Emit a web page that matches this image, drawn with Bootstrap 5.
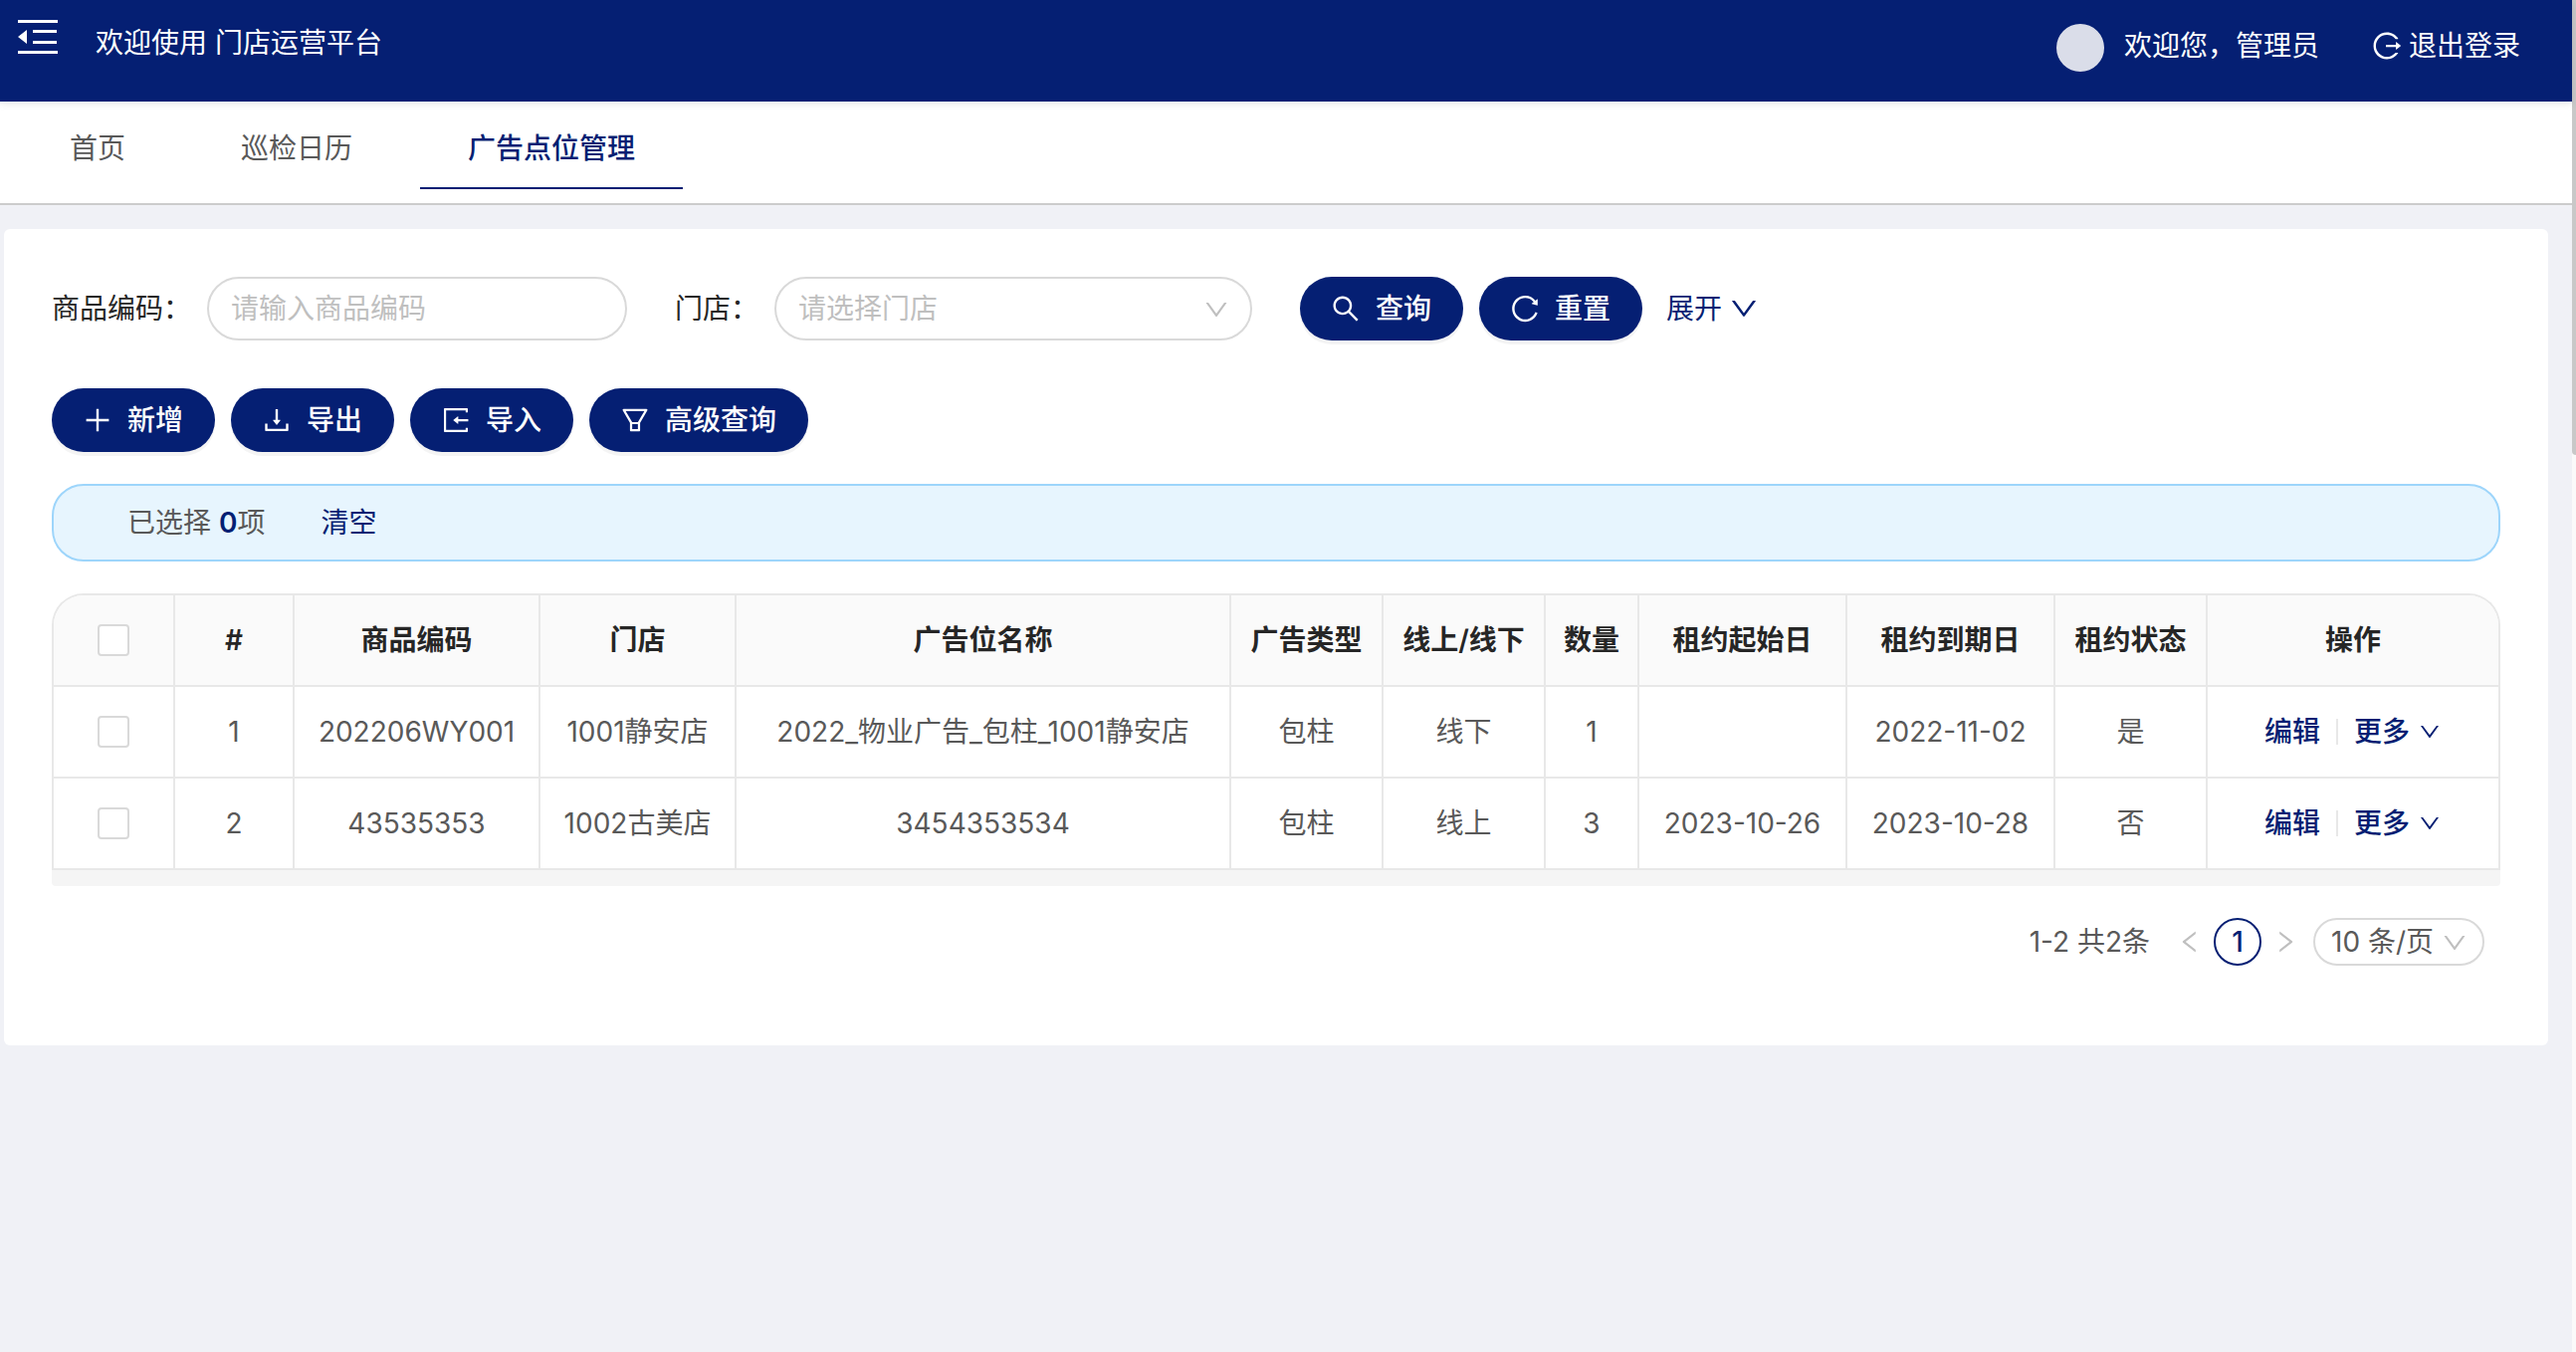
<!DOCTYPE html>
<html lang="zh-CN">
<head>
<meta charset="utf-8">
<meta name="viewport" content="width=device-width, initial-scale=1">
<title>门店运营平台</title>
<link href="https://cdn.jsdelivr.net/npm/bootstrap@5.3.0/dist/css/bootstrap.min.css" rel="stylesheet">
<style>
:root { --brand: #051f73; --line: #e8e8e8; --field: #d9d9d9; --muted: #bfbfbf; --ink: #262626; --body: #595959; }
body { background: #f0f1f6; color: var(--body); font-family: Inter, "Noto Sans CJK SC", sans-serif; font-size: 28px; line-height: 42px; }
svg.ic { width: 32px; height: 32px; fill: currentColor; flex: none; display: block; }
svg.ic-sm { width: 24px; height: 24px; }
svg.ic-md { width: 28px; height: 28px; }
.shell { min-height: 100vh; }
.page-col { min-width: 0; }
.scroll-rail { width: 4px; flex: none; background: #fafafa; }
.scroll-thumb { height: 457px; background: #c8c8c8; border-radius: 0 0 0 4px; }
.topbar { height: 102px; background: var(--brand); padding: 0 52px 10px 18px; box-shadow: 0 2px 8px rgba(0,0,0,.1); position: relative; z-index: 1; }
.fold { width: 40px; height: 36px; margin-bottom: 18px; color: #fff; }
.fold svg { display: block; fill: currentColor; }
.brand-name { margin-left: 38px; margin-bottom: 6px; }
.face { width: 48px; height: 48px; background: #dadde9; margin-top: 4px; }
.icon-text { gap: 6px; }
.tabs { height: 104px; background: #fff; border-bottom: 2px solid #ccc; padding-left: 22px; gap: 20px; }
.tabs .nav-link { color: var(--body); padding: 26px 48px 18px; border-bottom: 2px solid transparent; border-radius: 0; height: 88px; }
.tabs .nav-link.active { color: var(--brand); border-color: var(--brand); font-weight: 500; }
.panel { margin: 24px 24px 0 4px; padding: 48px 48px 80px; background: #fff; border-radius: 6px; }
.field-label { color: var(--ink); }
.pill-field { height: 64px; border: 2px solid var(--field); border-radius: 32px; padding: 0 22px; font-size: 28px; line-height: 42px; color: var(--ink); background: #fff; }
.pill-field::placeholder { color: var(--muted); }
select.pill-field { background-image: none; color: var(--muted); }
.code-field { width: 422px; }
.shop-field { width: 480px; }
.over-chevron { position: absolute; right: 22px; top: 50%; margin-top: -13px; color: var(--muted); pointer-events: none; }
.btn-pill { height: 64px; border: 0; border-radius: 32px; padding: 0 32px 0 30px; background: var(--brand); color: #fff; font-size: 28px; line-height: 42px; font-weight: 500; display: inline-flex; align-items: center; gap: 14px; box-shadow: 0 4px 0 rgba(0,0,0,.045); }
.btn-pill:hover { background: #17348f; color: #fff; }
a.plain { color: var(--brand); text-decoration: none; }
.picked { height: 78px; margin-top: 32px; border: 2px solid #9dd5fb; border-radius: 32px; background: #e7f5fe; padding: 0 74px; }
.grid-wrap { margin-top: 32px; border: 2px solid var(--line); border-bottom: 0; border-radius: 32px 32px 0 0; overflow: hidden; }
.grid { table-layout: fixed; border-collapse: separate; border-spacing: 0; margin: 0; color: var(--body); }
.grid th, .grid td { height: 92px; padding: 0 8px; border: 0; border-right: 2px solid var(--line); border-bottom: 2px solid var(--line); text-align: center; vertical-align: middle; white-space: nowrap; color: inherit; }
.grid tr > :last-child { border-right: 0; }
.grid thead th { background: #fafafa; color: var(--ink); font-weight: 600; }
.tick.form-check-input { width: 32px; height: 32px; margin: 0 auto; border: 2px solid var(--field); border-radius: 4px; display: block; }
.ops { font-weight: 500; }
.ops .bar { width: 2px; height: 26px; background: var(--line); margin: 0 16px; }
.track { height: 16px; background: #f5f5f5; border-radius: 0 0 4px 4px; }
.pager { margin-top: 32px; padding-right: 16px; }
.pager .page-now { width: 48px; height: 48px; border: 2px solid var(--brand); border-radius: 50%; color: var(--brand); font-weight: 500; }
.pager a.arrow { color: var(--muted); padding: 0 10px 0 14px; }
.pager .page-now + a.arrow { padding: 0 14px 0 10px; }
.pager .total { margin-right: 12px; }
.pager .size-field { height: 48px; width: 172px; border-radius: 24px; padding: 0 16px; color: var(--body); }
.pager .over-chevron { right: 16px; }
</style>
</head>
<body>
<svg class="d-none" xmlns="http://www.w3.org/2000/svg">
  <symbol id="down" viewBox="0 0 1024 1024"><path d="M884 256h-75c-5.1 0-9.9 2.5-12.9 6.6L512 654.2 227.9 262.6c-3-4.1-7.8-6.6-12.9-6.6h-75c-6.5 0-10.3 7.4-6.5 12.7l352.6 486.1c12.8 17.6 39 17.6 51.7 0l352.6-486.1c3.9-5.3.1-12.7-6.4-12.7z"/></symbol>
  <symbol id="left" viewBox="0 0 1024 1024"><path d="M724 218.3V141c0-6.7-7.7-10.4-12.9-6.3L260.3 486.8a31.86 31.86 0 0 0 0 50.3l450.8 352.1c5.3 4.1 12.9.4 12.9-6.3v-77.3c0-4.9-2.3-9.6-6.1-12.6l-360-281 360-281.1c3.8-3 6.1-7.7 6.1-12.6z"/></symbol>
  <symbol id="right" viewBox="0 0 1024 1024"><path transform="matrix(-1 0 0 1 1024 0)" d="M724 218.3V141c0-6.7-7.7-10.4-12.9-6.3L260.3 486.8a31.86 31.86 0 0 0 0 50.3l450.8 352.1c5.3 4.1 12.9.4 12.9-6.3v-77.3c0-4.9-2.3-9.6-6.1-12.6l-360-281 360-281.1c3.8-3 6.1-7.7 6.1-12.6z"/></symbol>
  <symbol id="search" viewBox="0 0 1024 1024"><path d="M909.6 854.5L649.9 594.8C690.2 542.7 712 479 712 412c0-80.2-31.3-155.4-87.9-212.1-56.6-56.7-132-87.9-212.1-87.9s-155.5 31.3-212.1 87.9C143.2 256.5 112 331.8 112 412c0 80.1 31.3 155.5 87.9 212.1C256.5 680.8 331.8 712 412 712c67 0 130.6-21.8 182.7-62l259.7 259.6a8.2 8.2 0 0 0 11.6 0l43.6-43.5a8.2 8.2 0 0 0 0-11.6zM570.4 570.4C528 612.7 471.8 636 412 636s-116-23.3-158.4-65.6C211.3 528 188 471.8 188 412s23.3-116.1 65.6-158.4C296 211.3 352.2 188 412 188s116.1 23.2 158.4 65.6S636 352.2 636 412s-23.3 116.1-65.6 158.4z"/></symbol>
  <symbol id="reload" viewBox="0 0 1024 1024"><path d="M909.1 209.3l-56.4 44.1C775.8 155.1 656.2 92 521.9 92 290 92 102.3 279.5 102 511.5 101.7 743.7 289.8 932 521.9 932c181.3 0 335.8-115 394.6-276.1 1.5-4.2-.7-8.9-4.9-10.3l-56.7-19.5a8 8 0 0 0-10.1 4.8c-1.8 5-3.8 10-5.9 14.9-17.3 41-42.1 77.8-73.7 109.4A344.77 344.77 0 0 1 655.9 829c-42.3 17.9-87.4 27-133.8 27-46.5 0-91.5-9.1-133.8-27A341.5 341.5 0 0 1 279 755.2a342.16 342.16 0 0 1-73.7-109.4c-17.9-42.4-27-87.4-27-133.9s9.1-91.5 27-133.9c17.3-41 42.1-77.8 73.7-109.4 31.6-31.6 68.4-56.4 109.3-73.8 42.3-17.9 87.4-27 133.8-27 46.5 0 91.5 9.1 133.8 27a341.5 341.5 0 0 1 109.3 73.8c9.9 9.9 19.2 20.4 27.8 31.4l-60.2 47a8 8 0 0 0 3 14.1l175.6 43c5 1.2 9.9-2.6 9.9-7.7l.8-180.9c-.1-6.6-7.8-10.3-13-6.2z"/></symbol>
  <symbol id="plus" viewBox="0 0 1024 1024"><path d="M474 152h76v322h326v76H550v322h-76V550H148v-76h326z"/></symbol>
  <symbol id="download" viewBox="0 0 1024 1024"><path d="M505.7 661a8 8 0 0 0 12.6 0l112-141.7c4.1-5.2.4-12.9-6.3-12.9h-74.1V168c0-4.4-3.6-8-8-8h-60c-4.4 0-8 3.6-8 8v338.3H400c-6.7 0-10.4 7.7-6.3 12.9l112 141.8zM878 626h-60c-4.4 0-8 3.6-8 8v154H214V634c0-4.4-3.6-8-8-8h-60c-4.4 0-8 3.6-8 8v198c0 17.7 14.3 32 32 32h684c17.7 0 32-14.3 32-32V634c0-4.4-3.6-8-8-8z"/></symbol>
  <symbol id="import" viewBox="0 0 1024 1024"><path d="M888.3 757.4h-53.8c-4.2 0-7.7 3.5-7.7 7.7v61.8H197.1V197.1h629.8v61.8c0 4.2 3.5 7.7 7.7 7.7h53.8c4.2 0 7.7-3.4 7.7-7.7V158.7c0-17-13.7-30.7-30.7-30.7H158.7c-17 0-30.7 13.7-30.7 30.7v706.6c0 17 13.7 30.7 30.7 30.7h706.6c17 0 30.7-13.7 30.7-30.7V765.1c0-4.3-3.5-7.7-7.7-7.7zM902 476H588v-76c0-6.7-7.8-10.5-13-6.3l-141.9 112a8 8 0 0 0 0 12.6l141.9 112c5.3 4.2 13 .4 13-6.3v-76h314c4.4 0 8-3.6 8-8v-56c0-4.4-3.6-8-8-8z"/></symbol>
  <symbol id="filter" viewBox="0 0 1024 1024"><path d="M880.1 154H143.9c-24.5 0-39.8 26.7-27.5 48L349 597.4V838c0 17.7 14.2 32 31.8 32h262.4c17.6 0 31.8-14.3 31.8-32V597.4L907.7 202c12.2-21.3-3.1-48-27.6-48zM603.4 798H420.6V642h182.9v156zm9.6-236.6l-9.5 16.6h-183l-9.5-16.6L212.7 226h598.6L613 561.4z"/></symbol>
  <symbol id="logout" viewBox="0 0 1024 1024"><path d="M868 732h-70.3c-4.8 0-9.3 2.1-12.3 5.8-7 8.5-14.5 16.7-22.4 24.5a353.84 353.84 0 0 1-112.7 75.9A352.8 352.8 0 0 1 512.4 866c-47.9 0-94.3-9.4-137.9-27.8a353.84 353.84 0 0 1-112.7-75.9 353.28 353.28 0 0 1-76-112.5C167.3 606.2 158 559.9 158 512s9.4-94.2 27.8-137.8c17.8-42.1 43.4-80 76-112.5s70.5-58.1 112.7-75.9c43.6-18.4 90-27.8 137.9-27.8 47.9 0 94.3 9.3 137.9 27.8 42.2 17.8 80.1 43.4 112.7 75.9 7.9 7.9 15.3 16.1 22.4 24.5 3 3.7 7.6 5.8 12.3 5.8H868c6.3 0 10.2-7 6.7-12.3C798 160.5 663.8 81.6 511.3 82 271.7 82.6 79.6 277.1 82 516.4 84.4 751.9 276.2 942 512.4 942c152.1 0 285.7-78.8 362.3-197.7 3.4-5.3-.4-12.3-6.7-12.3zm88.9-226.3L815 393.7c-5.3-4.2-13-.4-13 6.3v76H488c-4.4 0-8 3.6-8 8v56c0 4.4 3.6 8 8 8h314v76c0 6.7 7.8 10.5 13 6.3l141.9-112a8 8 0 0 0 0-12.6z"/></symbol>
</svg>

<div class="shell d-flex">
  <div class="page-col flex-grow-1">
    <header class="topbar d-flex align-items-center text-white">
      <button type="button" class="fold btn p-0 border-0 rounded-0" aria-label="收起菜单"><svg width="40" height="36" viewBox="0 0 40 36"><path d="M0 1h40v3H0zM15 11h24v3H15zM15 22h24v3H15zM0 32h40v3H0zM0 18l9-7v14z"/></svg></button>
      <div class="brand-name">欢迎使用 门店运营平台</div>
      <div class="ms-auto d-flex align-items-center">
        <span class="face rounded-circle"></span>
        <span class="ms-3 ps-1">欢迎您，管理员</span>
        <a href="#" class="icon-text d-flex align-items-center ms-5 ps-1 text-white text-decoration-none"><svg class="ic"><use href="#logout"/></svg>退出登录</a>
      </div>
    </header>
    <nav class="tabs nav flex-nowrap">
      <a class="nav-link" href="#">首页</a>
      <a class="nav-link" href="#">巡检日历</a>
      <a class="nav-link active" aria-current="page" href="#">广告点位管理</a>
    </nav>

    <main class="panel">
      <form class="d-flex align-items-center">
        <label class="field-label me-3" for="code">商品编码：</label>
        <input id="code" type="text" class="form-control pill-field code-field" placeholder="请输入商品编码">
        <label class="field-label ms-5 me-3" for="shop">门店：</label>
        <div class="position-relative">
          <select id="shop" class="form-select pill-field shop-field"><option>请选择门店</option></select>
          <svg class="ic ic-md over-chevron"><use href="#down"/></svg>
        </div>
        <button type="button" class="btn btn-pill ms-5"><svg class="ic"><use href="#search"/></svg>查询</button>
        <button type="button" class="btn btn-pill ms-3"><svg class="ic"><use href="#reload"/></svg>重置</button>
        <a href="#" class="icon-text plain d-flex align-items-center ms-4">展开<svg class="ic"><use href="#down"/></svg></a>
      </form>

      <div class="d-flex gap-3 mt-5">
        <button type="button" class="btn btn-pill"><svg class="ic"><use href="#plus"/></svg>新增</button>
        <button type="button" class="btn btn-pill"><svg class="ic"><use href="#download"/></svg>导出</button>
        <button type="button" class="btn btn-pill"><svg class="ic"><use href="#import"/></svg>导入</button>
        <button type="button" class="btn btn-pill"><svg class="ic"><use href="#filter"/></svg>高级查询</button>
      </div>

      <div class="picked d-flex align-items-center">
        <span>已选择 <a href="#" class="plain fw-semibold">0</a>项</span>
        <a href="#" class="plain ms-5 ps-2">清空</a>
      </div>

      <div class="grid-wrap">
        <table class="grid table">
          <colgroup>
            <col style="width:122px"><col style="width:120px"><col style="width:247px"><col style="width:197px"><col><col style="width:153px"><col style="width:163px"><col style="width:94px"><col style="width:209px"><col style="width:209px"><col style="width:153px"><col style="width:292px">
          </colgroup>
          <thead>
            <tr>
              <th scope="col"><input class="form-check-input tick" type="checkbox" aria-label="全选"></th>
              <th scope="col">#</th><th scope="col">商品编码</th><th scope="col">门店</th><th scope="col">广告位名称</th><th scope="col">广告类型</th><th scope="col">线上/线下</th><th scope="col">数量</th><th scope="col">租约起始日</th><th scope="col">租约到期日</th><th scope="col">租约状态</th><th scope="col">操作</th>
            </tr>
          </thead>
          <tbody>
            <tr>
              <td><input class="form-check-input tick" type="checkbox" aria-label="选择第1行"></td>
              <td>1</td><td>202206WY001</td><td>1001静安店</td><td>2022_物业广告_包柱_1001静安店</td><td>包柱</td><td>线下</td><td>1</td><td></td><td>2022-11-02</td><td>是</td>
              <td><div class="ops d-flex align-items-center justify-content-center"><a href="#" class="plain">编辑</a><span class="bar"></span><a href="#" class="plain d-flex align-items-center">更多<svg class="ic ic-sm ms-2"><use href="#down"/></svg></a></div></td>
            </tr>
            <tr>
              <td><input class="form-check-input tick" type="checkbox" aria-label="选择第2行"></td>
              <td>2</td><td>43535353</td><td>1002古美店</td><td>3454353534</td><td>包柱</td><td>线上</td><td>3</td><td>2023-10-26</td><td>2023-10-28</td><td>否</td>
              <td><div class="ops d-flex align-items-center justify-content-center"><a href="#" class="plain">编辑</a><span class="bar"></span><a href="#" class="plain d-flex align-items-center">更多<svg class="ic ic-sm ms-2"><use href="#down"/></svg></a></div></td>
            </tr>
          </tbody>
        </table>
      </div>
      <div class="track"></div>

      <nav class="pager d-flex align-items-center justify-content-end" aria-label="分页">
        <span class="total">1-2 共2条</span>
        <a href="#" class="arrow" aria-label="上一页"><svg class="ic ic-md"><use href="#left"/></svg></a>
        <a href="#" class="page-now plain d-flex align-items-center justify-content-center" aria-current="page">1</a>
        <a href="#" class="arrow" aria-label="下一页"><svg class="ic ic-md"><use href="#right"/></svg></a>
        <div class="position-relative">
          <select class="form-select pill-field size-field" aria-label="每页条数"><option>10 条/页</option></select>
          <svg class="ic ic-md over-chevron"><use href="#down"/></svg>
        </div>
      </nav>
    </main>
  </div>
  <div class="scroll-rail"><div class="scroll-thumb"></div></div>
</div>
<script src="https://cdn.jsdelivr.net/npm/bootstrap@5.3.0/dist/js/bootstrap.bundle.min.js"></script>
</body>
</html>
